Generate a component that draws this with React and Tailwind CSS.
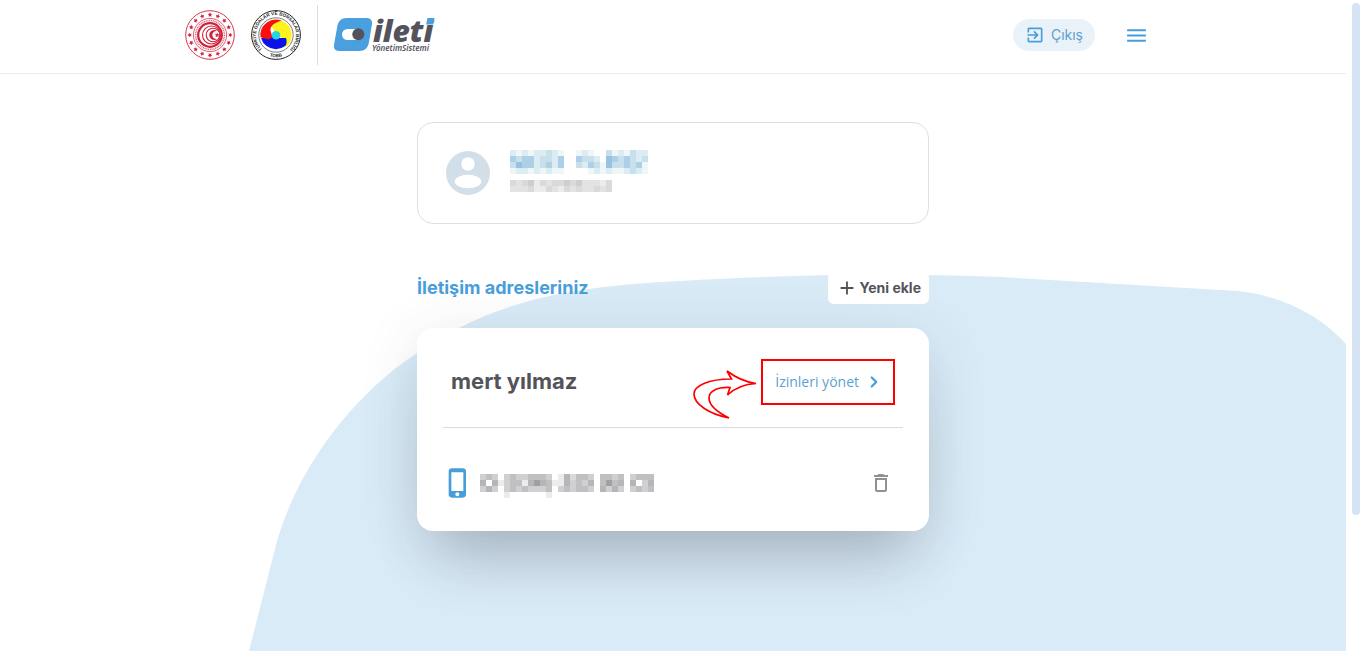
import { ChevronRight } from "lucide-react";
import {
  MdAdd,
  MdDeleteOutline,
  MdExitToApp,
  MdMenu,
  MdPhoneIphone,
} from "react-icons/md";

const CELL = 6;

const TONES = {
  a: "#eef6f8",
  b: "#dcecf3",
  c: "#c8e0ec",
  d: "#add0e8",
  e: "#93c4e2",
  f: "#b4d0dc",
  g: "#dadada",
  h: "#e3e3e3",
  i: "#ececed",
  j: "#cecece",
  k: "#d0d0d2",
  l: "#c0c0c3",
  m: "#b6b6b9",
  n: "#a0a0a4",
};

const NAME_MASK = [
  "bababbcba..aba..cabacbb",
  "dcddbccbd..dccb.edcdcbc",
  "ceddbcfbd..cbdcaeccdcda",
  "abbababaa....ababaabcba",
];

const ID_MASK = ["ghgjighggjgjhhhig", "hhhgiighighghhghg"];

const PHONE_MASK = [
  "klk.klkklllk.imgllk.llkl.klll",
  "m.mikllimnmliimklkm.lnlm.m.km",
  "kmk.klklkkkl.klkllk.mkmk.klkl",
  "....i......i.................",
];

const Masked = ({ rows, label }) => (
  <svg
    role="img"
    aria-label={label}
    width={rows[0].length * CELL}
    height={rows.length * CELL}
    shapeRendering="crispEdges"
  >
    {rows.map((row, y) =>
      [...row].map((tone, x) =>
        tone === "." ? null : (
          <rect
            key={`${x}-${y}`}
            x={x * CELL}
            y={y * CELL}
            width={CELL}
            height={CELL}
            fill={TONES[tone]}
          />
        )
      )
    )}
  </svg>
);

const around = (count) =>
  Array.from({ length: count }, (_, i) => (i * 360) / count);

const MinistryEmblem = () => (
  <svg viewBox="0 0 50 50" className="size-[50px]" aria-hidden="true">
    <g fill="none" stroke="#d0213c">
      <circle cx="25" cy="25" r="24.3" strokeWidth="0.9" />
      <circle cx="25" cy="25" r="16.6" strokeWidth="0.7" />
      <circle cx="25" cy="25" r="14.4" strokeWidth="1.6" strokeDasharray="1 0.8" opacity="0.7" />
      <circle cx="25" cy="25" r="11.8" strokeWidth="2.2" />
      <circle cx="26.5" cy="25" r="9" strokeWidth="1.1" />
      <circle cx="28" cy="25" r="6.8" strokeWidth="1.1" />
    </g>
    <g fill="#d0213c">
      {around(16).map((angle) => (
        <path
          key={angle}
          transform={`rotate(${angle} 25 25)`}
          d="M25 2.3l.7 1.5 1.6.2-1.2 1.1.3 1.6-1.4-.8-1.4.8.3-1.6-1.2-1.1 1.6-.2z"
        />
      ))}
      <path d="M32.5 21.2a5 5 0 1 0 0 7.6 4 4 0 1 1 0-7.6z" />
      <path d="M32.2 22.6l.7 1.6 1.8.1-1.4 1.2.4 1.8-1.5-1-1.6 1 .4-1.8-1.3-1.2 1.8-.1z" />
    </g>
  </svg>
);

const TobbEmblem = () => (
  <svg viewBox="0 0 50 50" className="size-[50px]" aria-hidden="true">
    <defs>
      <path id="ring-top" d="M13.5 41.4A20 20 0 1 1 36.5 41.4" />
      <path id="ring-bottom" d="M14 44.3A22.2 22.2 0 0 0 36 44.3" />
    </defs>
    <circle cx="25" cy="25" r="24.4" fill="#fff" stroke="#222" strokeWidth="1" />
    <circle cx="25" cy="25" r="17.2" fill="none" stroke="#222" strokeWidth="0.6" />
    <path d="M25 25l-5-10.5C24 11 30 10.4 32 11.3A15.5 15.5 0 0 1 39 32z" fill="#fdf31b" />
    <path d="M10 28h7c2 0 2-3 5-3l3 3h14.8A15.5 15.5 0 0 1 10 28z" fill="#0b12e8" />
    <path d="M35 28h5.2A15.5 15.5 0 0 1 33 38.3C36 35 36 31 35 28z" fill="#fdf31b" />
    <path
      d="M9.5 27A15.5 15.5 0 0 1 31 10.8C24 12 19 16 19.5 20.5l2 6.5-4 2.5c-3-1-6-1.5-8-2.5z"
      fill="#fb0f0c"
    />
    <circle cx="25" cy="25.2" r="4.3" fill="#27d3e2" />
    <g fontFamily="Liberation Sans, sans-serif" fontWeight="700" fill="#222" textAnchor="middle">
      <text fontSize="4.6">
        <textPath href="#ring-top" startOffset="50%">
          TÜRKİYE ODALAR VE BORSALAR BİRLİĞİ
        </textPath>
      </text>
      <text fontSize="4.5">
        <textPath href="#ring-bottom" startOffset="50%">
          TOBB
        </textPath>
      </text>
    </g>
  </svg>
);

const IletiLogo = () => (
  <svg viewBox="0 -10 110 60" className="h-[60px] w-[110px]" aria-hidden="true">
    <path
      d="M13 3H32c4.500 0 6.500 2 6 6l-3 18c-1 6-4 9-10 9H6c-4.500 0-6.500-2-6-6L3 13C4 6 7 3 13 3z"
      fill="#4a9fdf"
    />
    <rect x="8" y="14" width="20" height="11" rx="5.5" fill="#fff" />
    <circle cx="24.3" cy="19.3" r="6" fill="#54535b" />
    <g fontFamily="Noto Sans, sans-serif" fontStyle="italic" fill="#54535b">
      <text x="39" y="27" fontSize="30" fontWeight="900">
        ileti
      </text>
      <text x="38" y="36" fontSize="8" fontWeight="600">
        YönetimSistemi
      </text>
    </g>
    <path d="M93.5 3h7l-1.400 6.500h-7z" fill="#4a9fdf" />
  </svg>
);

const Header = () => (
  <header className="border-b border-[#ececef] bg-white">
    <div className="mx-auto flex h-[73px] max-w-[976px] items-start justify-between">
      <a href="#" className="flex items-center gap-4 pt-[5px]" aria-label="ileti">
        <MinistryEmblem />
        <TobbEmblem />
        <span className="h-[60px] w-px bg-[#dcdcde]" />
        <IletiLogo />
      </a>
      <div className="flex items-center gap-[29px] pt-[19px] pr-3">
        <button
          type="button"
          className="flex h-8 items-center gap-1.5 rounded-full bg-[#eaf2f9] px-3 text-sm text-[#5b9fd0]"
        >
          <MdExitToApp size={20} className="text-[#489ddb]" />
          Çıkış
        </button>
        <button type="button" aria-label="Menü" className="text-[#489ddb]">
          <MdMenu size={25} />
        </button>
      </div>
    </div>
  </header>
);

const ProfileCard = () => (
  <section className="flex h-[102px] items-center gap-5 rounded-2xl border border-[#dfdfe1] bg-white px-7">
    <svg viewBox="0 0 44 44" className="size-11" aria-hidden="true">
      <circle cx="22" cy="22" r="22" fill="#d3dfe8" />
      <circle cx="22" cy="13" r="6.7" fill="#fff" />
      <ellipse cx="22" cy="30.5" rx="13.3" ry="6.7" fill="#fff" />
    </svg>
    <div className="flex flex-col gap-1.5 pb-1">
      <Masked rows={NAME_MASK} label="Ad soyad" />
      <Masked rows={ID_MASK} label="Kimlik numarası" />
    </div>
  </section>
);

const ContactCard = () => (
  <section className="mt-6 rounded-2xl bg-white px-[26px] shadow-[0_44px_60px_-20px_rgba(50,50,55,0.24),0_10px_60px_rgba(50,60,80,0.12)]">
    <div className="flex h-[100px] items-center justify-between border-b border-[#dcdcde] px-2 pt-2">
      <h3 className="text-[22px] font-bold text-[#54535b]">mert yılmaz</h3>
      <div className="flex items-center gap-0.5">
        <svg
          viewBox="0 0 66 50"
          className="mt-6 h-[50px] w-[66px]"
          fill="none"
          stroke="#ff0000"
          strokeWidth="1.7"
          aria-hidden="true"
        >
          <path d="M34 2L38.5 10C15 10 1 17 1 25c0 10 15 20 35 24C24 43 16 36 16 29c0-7 8-11 21-10.5L34.5 26C42 19 52 15 63 14.5 52 13 42 8 34 2z" />
        </svg>
        <a
          href="#"
          className="flex h-[46px] items-center gap-1.5 border-2 border-[#ff0000] pr-2.5 pl-3 font-['Open_Sans',sans-serif] text-sm text-[#5b9fd0]"
        >
          İzinleri yönet
          <ChevronRight size={18} strokeWidth={3} className="text-[#489ddb]" />
        </a>
      </div>
    </div>
    <div className="flex h-[103px] items-center justify-between pt-[7px] pr-2.5">
      <div className="flex items-center gap-1.5">
        <MdPhoneIphone size={32} className="-ml-px text-[#489ddb]" />
        <div className="pt-1.5">
          <Masked rows={PHONE_MASK} label="Telefon numarası" />
        </div>
      </div>
      <button type="button" aria-label="Sil" className="text-[#919194]">
        <MdDeleteOutline size={24} />
      </button>
    </div>
  </section>
);

const App = () => (
  <div className="flex min-h-screen bg-white font-['Inter',sans-serif]">
    <div className="relative flex flex-1 flex-col overflow-hidden">
      <svg
        viewBox="0 0 1346 651"
        preserveAspectRatio="xMidYMin slice"
        className="absolute inset-0 h-full w-full"
        aria-hidden="true"
      >
        <path
          d="M249 651L275 549C292 480 345 400 417 353 480 310 545 287 680 281 800 274 900 273 1000 277L1237 291C1280 295 1320 315 1346 344V651z"
          fill="#d9ebf7"
        />
      </svg>
      <div className="relative">
        <Header />
        <main className="mx-auto max-w-lg pt-12 pb-[120px]">
          <ProfileCard />
          <div className="mt-12 flex items-center justify-between">
            <h2 className="text-lg font-bold text-[#489ddb]">
              İletişim adresleriniz
            </h2>
            <button
              type="button"
              className="flex h-8 items-center gap-0.5 rounded-md bg-white px-2 text-sm font-bold text-[#54535b]"
            >
              <MdAdd size={22} />
              Yeni ekle
            </button>
          </div>
          <ContactCard />
        </main>
      </div>
    </div>
    <div className="w-5 bg-white px-1.5 pt-[3px]">
      <div className="h-[512px] rounded-full bg-[#d5e3f5]" />
    </div>
  </div>
);

export default App;
